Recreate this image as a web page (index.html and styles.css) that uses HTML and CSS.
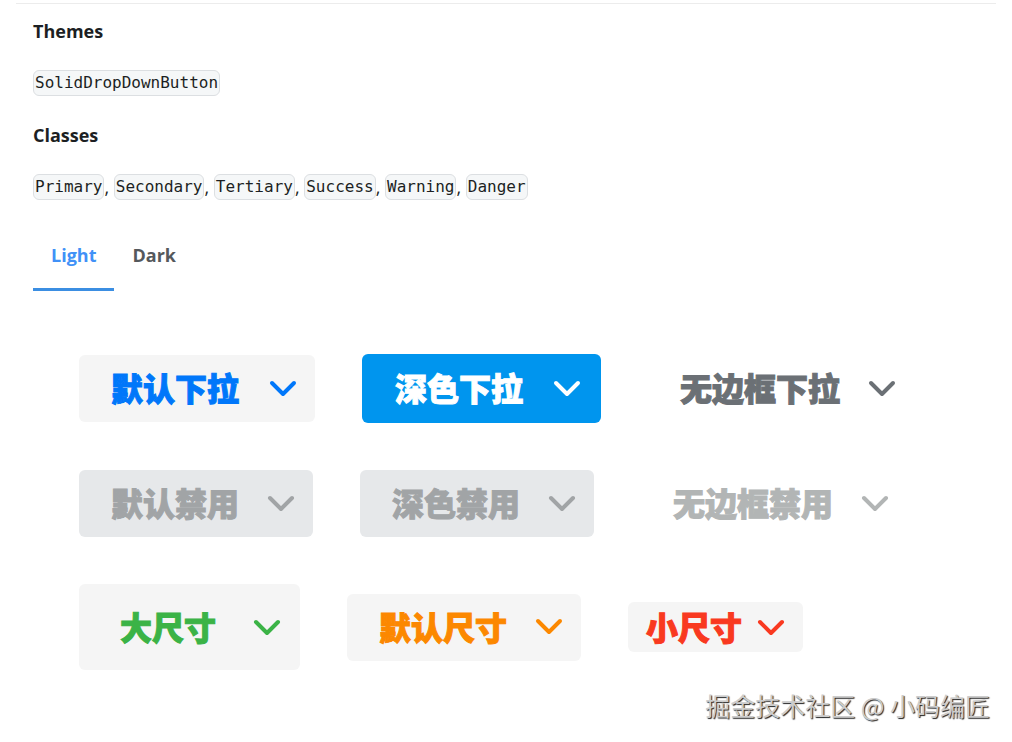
FILE: index.html
```html
<!DOCTYPE html>
<html lang="zh-CN">
<head>
    <meta charset="UTF-8">
    <meta name="viewport" content="width=device-width, initial-scale=1.0">
    <title>SolidDropDownButton</title>
    <link rel="stylesheet" href="styles.css">
</head>
<body>
    <svg class="sprite" aria-hidden="true">
        <symbol id="chevron" viewBox="0 0 28 18">
            <path d="M3 4 L14 15 L25 4"/>
        </symbol>
    </svg>

    <hr class="divider">

    <main class="content">
        <h3>Themes</h3>
        <p class="codes"><code>SolidDropDownButton</code></p>

        <h3>Classes</h3>
        <p class="codes"><code>Primary</code>, <code>Secondary</code>, <code>Tertiary</code>, <code>Success</code>, <code>Warning</code>, <code>Danger</code></p>

        <div class="tabs" role="tablist">
            <button type="button" class="tab active" role="tab" aria-selected="true">Light</button>
            <button type="button" class="tab" role="tab" aria-selected="false">Dark</button>
        </div>

        <div class="demo">
            <div class="row">
                <button type="button" class="dropdown primary">默认下拉<svg class="chevron"><use href="#chevron"/></svg></button>
                <button type="button" class="dropdown solid">深色下拉<svg class="chevron"><use href="#chevron"/></svg></button>
                <button type="button" class="dropdown borderless">无边框下拉<svg class="chevron"><use href="#chevron"/></svg></button>
            </div>
            <div class="row">
                <button type="button" class="dropdown" disabled>默认禁用<svg class="chevron"><use href="#chevron"/></svg></button>
                <button type="button" class="dropdown" disabled>深色禁用<svg class="chevron"><use href="#chevron"/></svg></button>
                <button type="button" class="dropdown borderless" disabled>无边框禁用<svg class="chevron"><use href="#chevron"/></svg></button>
            </div>
            <div class="row">
                <button type="button" class="dropdown large success">大尺寸<svg class="chevron"><use href="#chevron"/></svg></button>
                <button type="button" class="dropdown warning">默认尺寸<svg class="chevron"><use href="#chevron"/></svg></button>
                <button type="button" class="dropdown small danger">小尺寸<svg class="chevron"><use href="#chevron"/></svg></button>
            </div>
        </div>
    </main>

    <footer class="credit">掘金技术社区 @ 小码编匠</footer>
</body>
</html>
```
FILE: styles.css
```css
:root {
    --primary: #0077fa;
    --solid: #0095ee;
    --tertiary: #6b7075;
    --success: #3bb346;
    --warning: #fc8800;
    --danger: #f93920;
    --fill: #f5f5f5;
    --fill-disabled: #e6e8ea;
    --accent: #4091f7;
}
* {
    box-sizing: border-box;
}
body {
    margin: 0;
    font-family: "Open Sans", "Noto Sans CJK SC", sans-serif;
    color: #1c1f23;
    background-color: #fff;
}
.sprite {
    display: none;
}
.divider {
    height: 1px;
    margin: 3px 16px 0;
    border: 0;
    background-color: #ececec;
}
.content {
    padding: 12px 33px 0;
}
h3 {
    margin: 0 0 24px;
    font-size: 18px;
    font-weight: 700;
    line-height: 30px;
}
.codes {
    margin: 0 0 24px;
    font-size: 18px;
    line-height: 26px;
}
code {
    display: inline-block;
    height: 26px;
    padding: 0 1px;
    border: 1px solid #dcdfe2;
    border-radius: 6px;
    background-color: #f5f7f8;
    font-family: "DejaVu Sans Mono", monospace;
    font-size: 16px;
    line-height: 24px;
    vertical-align: top;
}
.tabs {
    display: flex;
}
.tab {
    padding: 17px 18px 19px;
    border: 0;
    border-bottom: 3px solid transparent;
    background: none;
    color: #55585c;
    font-family: inherit;
    font-size: 18px;
    font-weight: 700;
    line-height: 28px;
    cursor: pointer;
}
.tab.active {
    color: var(--accent);
    border-bottom-color: #3b8ee2;
}
.demo {
    display: flex;
    flex-direction: column;
    gap: 47px;
    padding: 63px 46px 0;
}
.row {
    display: flex;
    align-items: center;
    gap: 47px;
}
.dropdown {
    display: flex;
    align-items: center;
    gap: 28px;
    padding: 9px 18px 11px 32px;
    border: 0;
    border-radius: 6px;
    background-color: var(--fill);
    color: var(--tertiary);
    font-family: "Noto Sans CJK SC", sans-serif;
    font-size: 32px;
    font-weight: 900;
    line-height: 47px;
    white-space: nowrap;
    -webkit-text-stroke: 1px currentColor;
    cursor: pointer;
}
.dropdown.large {
    gap: 37px;
    padding: 19px 19px 20px 41px;
}
.dropdown.small {
    gap: 15px;
    padding: 1px 18px 2px;
}
.dropdown.primary {
    gap: 30px;
    color: var(--primary);
}
.dropdown.solid {
    gap: 30px;
    padding: 10px 20px 12px 33px;
    background-color: var(--solid);
    color: #fff;
}
.success {
    color: var(--success);
}
.warning {
    color: var(--warning);
}
.danger {
    color: var(--danger);
}
.dropdown:disabled {
    background-color: var(--fill-disabled);
    color: #a1a4a6;
    cursor: not-allowed;
}
.dropdown.borderless {
    background-color: transparent;
}
.dropdown.borderless:disabled {
    color: #b2b5b5;
}
.chevron {
    width: 28px;
    height: 18px;
    fill: none;
    stroke: currentColor;
    stroke-width: 4;
    stroke-linecap: round;
    stroke-linejoin: round;
}
.credit {
    padding: 15px 22px 12px;
    color: #ccc;
    font-family: "Noto Sans CJK SC", sans-serif;
    font-size: 25px;
    line-height: 40px;
    text-align: right;
    text-shadow: 1px 1px 1px #222;
}
```
